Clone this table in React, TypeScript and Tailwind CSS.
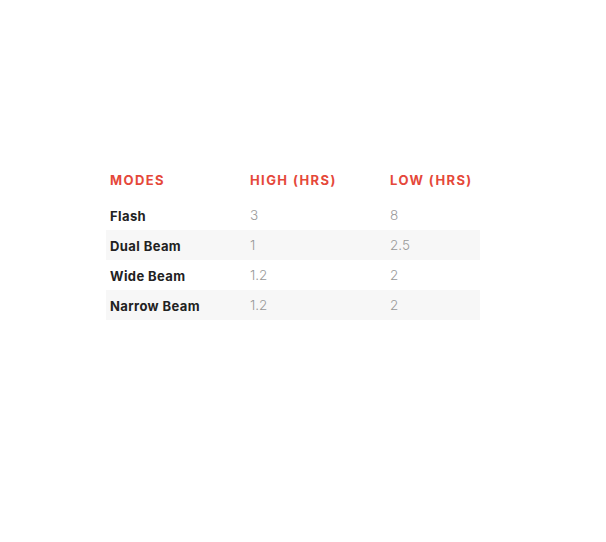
const rows = [
  { mode: "Flash", high: "3", low: "8" },
  { mode: "Dual Beam", high: "1", low: "2.5" },
  { mode: "Wide Beam", high: "1.2", low: "2" },
  { mode: "Narrow Beam", high: "1.2", low: "2" },
];

export default function App() {
  return (
    <div className="min-h-[542px] w-[606px] bg-white pt-[166px] pl-[106px] font-['Inter',sans-serif]">
      <table className="w-[374px] border-collapse table-fixed">
        <thead>
          <tr>
            {["MODES", "HIGH (HRS)", "LOW (HRS)"].map((h) => (
              <th
                key={h}
                className="w-[140px] last:w-[94px] pt-1 pb-[10px] pl-1 text-left text-[13px] leading-5 font-bold tracking-[1.4px] text-[#e5483a]"
              >
                {h}
              </th>
            ))}
          </tr>
        </thead>
        <tbody>
          {rows.map((r, i) => (
            <tr key={r.mode} className={i % 2 === 1 ? "bg-[#f7f7f7]" : "bg-white"}>
              <td className="h-[30px] pl-1 pt-[2px] leading-5 text-[13px] font-bold tracking-[0.4px] text-[#222]">{r.mode}</td>
              <td className="h-[30px] pl-1 leading-5 text-[13.5px] font-light text-[#999]">{r.high}</td>
              <td className="h-[30px] pl-1 leading-5 text-[13.5px] font-light text-[#999]">{r.low}</td>
            </tr>
          ))}
        </tbody>
      </table>
    </div>
  );
}
